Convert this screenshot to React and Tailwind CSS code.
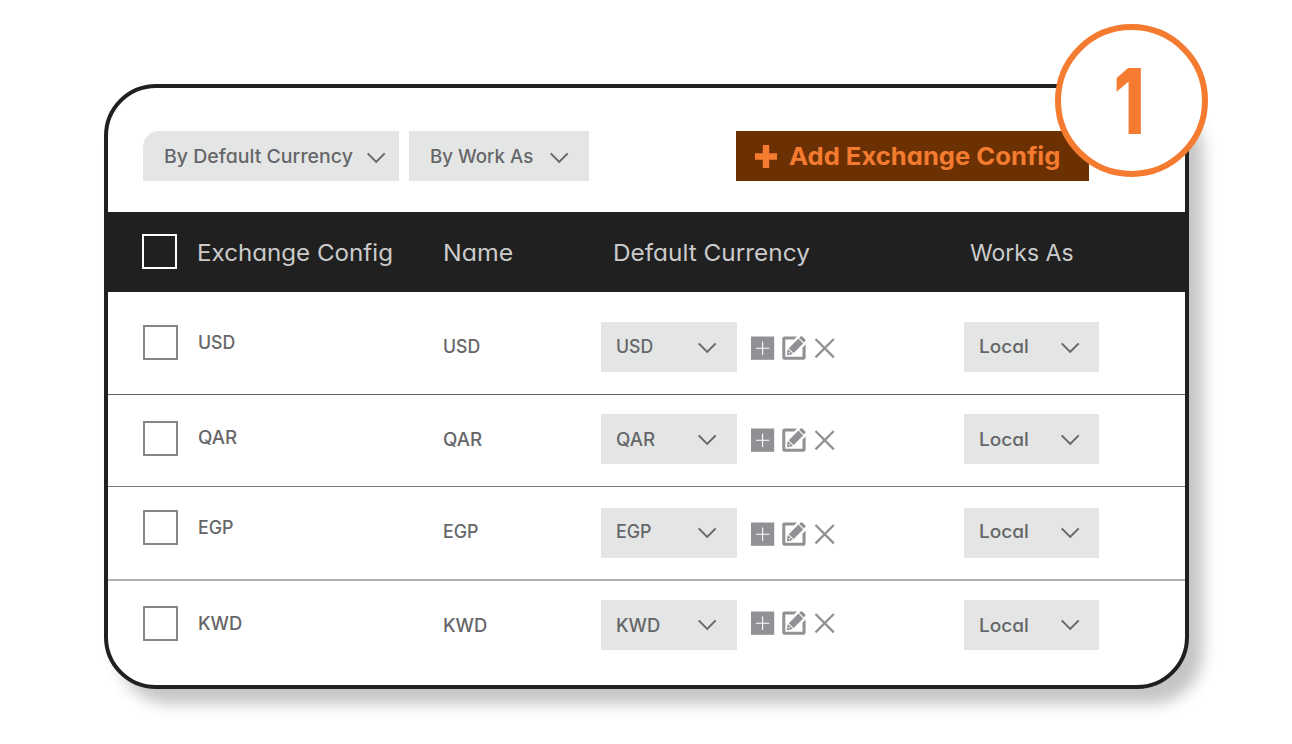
const rows = [
  {
    code: "USD", stretch: "scale-x-[0.98]", height: "h-[103px]", line: "border-b border-[#666668]",
    check: "mt-[33px]", label: "mt-[41px]", name: "mt-[45px]", select: "mt-[30px]", icons: "mt-[44px]", nudge: "mb-px", arrow: "mt-px",
  },
  {
    code: "QAR", stretch: "scale-x-[1.04]", height: "h-[92px]", line: "border-b border-[#7c7c7f]",
    check: "mt-[26px]", label: "mt-[33px]", name: "mt-[35px]", select: "mt-[19px]", icons: "mt-[33px]", nudge: "mt-px", arrow: "mt-px",
  },
  {
    code: "EGP", stretch: "scale-x-[0.99]", height: "h-[94px]", line: "border-b-2 border-[#b0b0b1]",
    check: "mt-[23px]", label: "mt-[31px]", name: "mt-[35px]", select: "mt-[21px]", icons: "mt-[35px]", nudge: "mb-[2px]", arrow: "mt-0",
  },
  {
    code: "KWD", stretch: "scale-x-[1.02]", height: "h-[104px]", line: "",
    check: "mt-[25px]", label: "mt-[33px]", name: "mt-[35px]", select: "mt-[19px]", icons: "mt-[30px]", nudge: "mt-px", arrow: "mt-0",
  },
];

function Chevron({ className = "" }) {
  return (
    <svg className={`h-[12px] w-[20px] shrink-0 ${className}`} viewBox="0 0 20 12" fill="none" stroke="#666669" strokeWidth="2">
      <path d="M1.7 1.4L10.2 9.9L18.7 1.4" />
    </svg>
  );
}

function AddIcon() {
  return (
    <svg className="size-[24px]" viewBox="0 0 24 24">
      <rect x="0" y="0.5" width="23.2" height="23.3" fill="#919195" />
      <path d="M11.6 5.5V18.9M4.9 12.2H18.3" stroke="#fff" strokeWidth="1.1" />
    </svg>
  );
}

function EditIcon() {
  return (
    <svg className="size-[24px]" viewBox="0 0 24 24">
      <path d="M15 0.4H2.4Q0.3 0.4 0.3 2.5V21.7Q0.3 23.8 2.4 23.8H21.5Q23.6 23.8 23.6 21.7V8.4L20.5 11.4V20.7H3.3V3.5H12Z" fill="#919195" />
      <path d="M17.2 1.9L18.6 0.6Q19.6 -0.2 20.6 0.7L23.1 3.2Q24 4.2 23.1 5.1L21.9 6.5Z" fill="#919195" />
      <path d="M16.4 2.6L21.2 7.4L11.6 17L6.8 12.2Z" fill="#919195" />
      <path d="M6 13L10.8 17.8L9 18.6L5 19.3L5.3 15.2Z" fill="#919195" />
      <circle cx="7.2" cy="16.8" r="0.8" fill="#fff" />
    </svg>
  );
}

function CloseIcon() {
  return (
    <svg className="size-[24px]" viewBox="0 0 24 24" stroke="#919195" strokeWidth="2.3">
      <path d="M2.5 3L20.8 21.4M20.8 3L2.5 21.4" />
    </svg>
  );
}

function Select({ className, label, stretch, nudge, arrow }) {
  return (
    <div className={`flex h-[50px] items-center justify-between bg-[#e4e6e5] pl-[15px] text-[18px] leading-5 font-medium ${className}`}>
      <span className={`origin-left ${stretch} ${nudge}`}>{label}</span>
      <Chevron className={arrow} />
    </div>
  );
}

export default function App() {
  return (
    <div className="relative h-[744px] w-[1292px] overflow-hidden bg-white pt-[84px] pl-[104px] font-['Inter',sans-serif] whitespace-nowrap text-[#666669] [font-feature-settings:'cv11']">
      <main className="h-[605px] w-[1085px] rounded-[52px] border-4 border-[#202020] bg-white shadow-[14px_15px_15px_0_rgba(0,0,0,0.23)]">
        <div className="flex h-[124px] items-start pt-[43px] pl-[35px] text-[18.5px] leading-5 font-medium">
          <div className="flex h-[50px] w-[256px] items-center justify-between rounded-tl-[16px] bg-[#e4e6e5] pr-[13px] pl-[21px]">
            <span className="origin-left scale-x-[1.055]">By Default Currency</span>
            <Chevron className="mt-1" />
          </div>
          <div className="ml-[10px] flex h-[50px] w-[180px] items-center justify-between bg-[#e4e6e5] pr-[20px] pl-[21px]">
            <span className="origin-left scale-x-[1.01]">By Work As</span>
            <Chevron className="mt-1" />
          </div>
          <button className="ml-[147px] flex h-[50px] w-[353px] items-center bg-[#6b3102] pl-[19px] text-[24.5px] leading-7 font-bold text-[#f47b30]">
            <svg className="h-[23px] w-[22px]" viewBox="0 0 22 23" stroke="#f47b30" strokeWidth="6.4">
              <path d="M11 0V23M0 11.5H22" />
            </svg>
            <span className="ml-[12px] origin-left scale-x-[1.045]">Add Exchange Config</span>
          </button>
        </div>

        <div className="grid h-[80px] grid-cols-[89px_246px_158px_363px_1fr] items-center bg-[#202020] pt-px text-[23px] leading-7 text-[#cbcbcb]">
          <div className="mb-[2px] ml-[34px] size-[35px] border-2 border-white" />
          <span className="origin-left scale-x-[1.05]">Exchange Config</span>
          <span className="origin-left scale-x-[1.08]">Name</span>
          <span className="ml-[12px] origin-left scale-x-[1.06]">Default Currency</span>
          <span className="ml-[6px] origin-left">Works As</span>
        </div>

        {rows.map((r) => (
          <div
            key={r.code}
            className={`grid grid-cols-[89px_246px_158px_363px_1fr] items-start text-[18px] leading-5 font-medium ${r.height} ${r.line}`}
          >
            <div className={`ml-[35px] size-[35px] border-2 border-[#86868a] ${r.check}`} />
            <span className={`ml-px origin-left ${r.label} ${r.stretch}`}>{r.code}</span>
            <span className={`origin-left ${r.name} ${r.stretch}`}>{r.code}</span>
            <div className="flex items-start">
              <Select className={`w-[136px] pr-[20px] ${r.select}`} label={r.code} stretch={r.stretch} nudge={r.nudge} arrow={r.arrow} />
              <div className={`ml-[14px] flex gap-[7px] ${r.icons}`}>
                <AddIcon />
                <EditIcon />
                <CloseIcon />
              </div>
            </div>
            <Select className={`w-[135px] pr-[19px] ${r.select}`} label="Local" stretch="scale-x-[1.06]" nudge={r.nudge} arrow={r.arrow} />
          </div>
        ))}
      </main>

      <div className="absolute top-[24px] left-[1055px] flex size-[153px] items-center justify-center rounded-full border-[6px] border-[#f47b30] bg-white text-[91px] leading-none font-extrabold text-[#f47b30]">
        <span className="mt-[2px] mr-[4px] scale-x-[0.78]">1</span>
      </div>
    </div>
  );
}
